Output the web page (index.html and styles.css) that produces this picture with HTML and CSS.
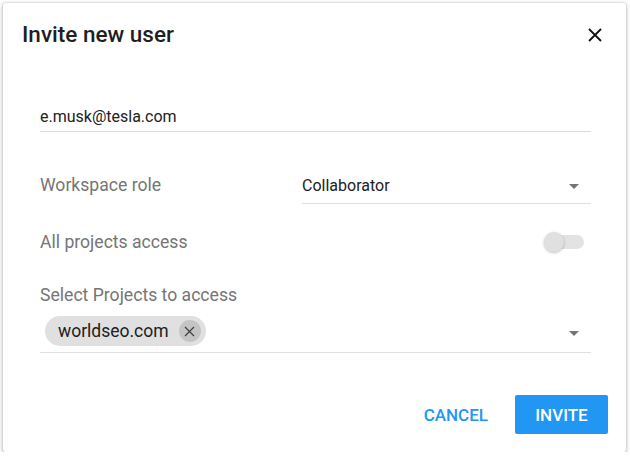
FILE: index.html
```html
<!DOCTYPE html>
<html>
<head>
<meta charset="utf-8">
<link rel="stylesheet" href="styles.css">
</head>
<body>
<div class="dialog">
  <div class="header">
    <h1 class="title">Invite new user</h1>
    <button class="close" aria-label="Close">
      <svg width="14" height="14" viewBox="0 0 14 14"><path d="M1 1L13 13M13 1L1 13" stroke="#111" stroke-width="1.8" fill="none"/></svg>
    </button>
  </div>
  <div class="content">
    <div class="field email">e.musk@tesla.com</div>
    <div class="row role">
      <div class="label">Workspace role</div>
      <div class="select">
        <span>Collaborator</span>
        <span class="arrow"></span>
      </div>
    </div>
    <div class="row access">
      <div class="label">All projects access</div>
      <div class="toggle"><span class="track"></span><span class="thumb"></span></div>
    </div>
    <div class="label projects-label">Select Projects to access</div>
    <div class="multiselect">
      <div class="chip">
        <span class="chip-text">worldseo.com</span>
        <span class="chip-del">
          <svg width="11" height="11" viewBox="0 0 11 11"><path d="M1 1L10 10M10 1L1 10" stroke="#3a3a3a" stroke-width="1.1" fill="none"/></svg>
        </span>
      </div>
      <span class="arrow"></span>
    </div>
  </div>
  <div class="actions">
    <button class="btn cancel">CANCEL</button>
    <button class="btn invite">INVITE</button>
  </div>
</div>
</body>
</html>
```
FILE: styles.css
```css
* { box-sizing: border-box; }
html, body { margin: 0; padding: 0; background: #fff; }
body { font-family: Roboto, "Noto Sans", sans-serif; }
.dialog {
  margin: 3px 0 0 3px;
  width: 623px;
  height: 449px;
  background: #fff;
  border-radius: 2px;
  box-shadow: 0 1px 4px rgba(0,0,0,0.35), 0 0 1px rgba(0,0,0,0.3);
  display: flex;
  flex-direction: column;
}
.header {
  display: flex;
  justify-content: space-between;
  align-items: center;
  padding: 17px 24px 0 19px;
  height: 44px;
}
.title {
  margin: 0;
  font-size: 22.5px;
  line-height: 26px;
  font-weight: 500;
  color: #1f1f1f;
}
.close {
  border: 0;
  background: none;
  padding: 0;
  width: 14px;
  height: 14px;
  display: flex;
  margin-top: 3px;
}
.content {
  padding: 0 35px 0 37px;
  flex: 1;
}
.field.email {
  margin-top: 60px;
  font-size: 16px;
  line-height: 20px;
  color: #212121;
  padding-bottom: 4px;
  border-bottom: 1px solid #dcdcdc;
}
.row {
  display: flex;
  align-items: flex-end;
  justify-content: space-between;
}
.label {
  font-size: 17.6px;
  line-height: 20px;
  color: #757575;
}
.role { margin-top: 43px; }
.role .label { padding-bottom: 9px; }
.select {
  width: 289px;
  display: flex;
  justify-content: space-between;
  align-items: center;
  font-size: 16px;
  line-height: 20px;
  color: #212121;
  padding: 0 12px 7px 0;
  border-bottom: 1px solid #e0e0e0;
}
.arrow {
  width: 0; height: 0;
  border-left: 5px solid transparent;
  border-right: 5px solid transparent;
  border-top: 5px solid #757575;
}
.access { margin-top: 28px; align-items: center; }
.toggle {
  position: relative;
  width: 40px;
  height: 20px;
  margin-right: 7px;
}
.track {
  position: absolute;
  left: 6px; top: 3px;
  width: 34px; height: 14px;
  border-radius: 7px;
  background: #e3e3e3;
}
.thumb {
  position: absolute;
  left: 0; top: 0;
  width: 20px; height: 20px;
  border-radius: 50%;
  background: #e0e0e0;
  box-shadow: 0 1px 3px rgba(0,0,0,0.25);
}
.projects-label { margin-top: 33px; }
.multiselect {
  margin-top: 11px;
  display: flex;
  justify-content: space-between;
  align-items: center;
  padding: 0 12px 6px 5px;
  border-bottom: 1px solid #e0e0e0;
}
.multiselect .arrow { margin-top: 4px; }
.chip {
  display: flex;
  align-items: center;
  height: 30px;
  border-radius: 15px;
  background: #e0e0e0;
  padding: 0 5px 0 13px;
}
.chip-text {
  font-size: 17.5px;
  color: #212121;
  margin-right: 10px;
}
.chip-del {
  width: 22px; height: 22px;
  border-radius: 50%;
  background: #c4c4c4;
  display: flex;
  align-items: center;
  justify-content: center;
}
.actions {
  display: flex;
  justify-content: flex-end;
  align-items: center;
  gap: 18px;
  padding: 0 18px 18px 0;
}
.btn {
  font-family: Roboto, "Noto Sans", sans-serif;
  font-size: 17px;
  font-weight: 500;
  border: 0;
  border-radius: 2px;
  height: 39px;
  cursor: pointer;
}
.cancel {
  background: none;
  color: #2196f3;
  padding: 0 9px;
}
.invite {
  background: #2196f3;
  color: #fff;
  width: 93px;
}
```
